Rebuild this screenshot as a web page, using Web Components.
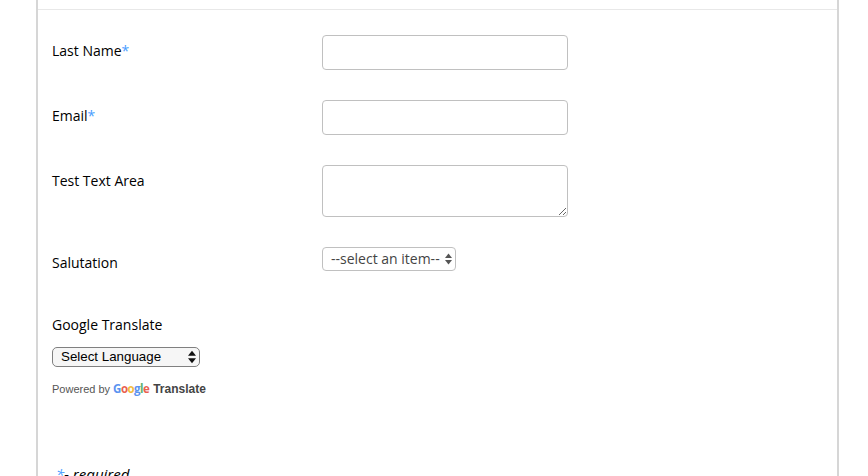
<!DOCTYPE html>
<html><head><meta charset="utf-8"><style>
html,body{margin:0;padding:0;background:#fff;overflow:hidden;height:476px}
body{font-family:"Open Sans",sans-serif;font-size:14px;color:#000}
</style></head><body>
<form-card>
  <form-row label="Last Name" required><form-input></form-input></form-row>
  <form-row label="Email" required><form-input></form-input></form-row>
  <form-row label="Test Text Area"><form-input multiline></form-input></form-row>
  <form-row label="Salutation"><item-select></item-select></form-row>
  <translate-block></translate-block>
  <required-note></required-note>
</form-card>
<script>
function def(name,html,init){customElements.define(name,class extends HTMLElement{
  constructor(){super();this.attachShadow({mode:'open'}).innerHTML=html;}
  connectedCallback(){if(init)init.call(this,this.shadowRoot);}
});}
const arrows=(c,w,h)=>`<svg width="${w}" height="${h}" viewBox="0 0 7 12" fill="${c}"><path d="M3.5 0.5 L7 5 H0Z"/><path d="M0 7 H7 L3.5 11.5Z"/></svg>`;
def('form-card',`<style>
:host{display:block;box-sizing:border-box;width:803px;height:476px;margin-left:36px;border-left:2px solid #d6d6d6;border-right:2px solid #d6d6d6;overflow:hidden}
.head{height:9px;border-bottom:1px solid #e8e8e8}
.body{padding:25px 0 0 14px;display:flex;flex-direction:column;gap:30px}
</style><div class="head"></div><div class="body"><slot></slot></div>`);
def('form-row',`<style>
:host{display:grid;grid-template-columns:270px 1fr;color:#000}
.l{padding-top:6px;line-height:20px;font-size:14px}
.s{color:#4a9eff}
</style><div class="l"><span id="t"></span><span class="s" id="r"></span></div><div><slot></slot></div>`,function(s){
  s.getElementById('t').textContent=this.getAttribute('label');
  s.getElementById('r').textContent=this.hasAttribute('required')?'*':'';
});
def('form-input',`<style>
:host{display:block;width:246px}
input,textarea{display:block;box-sizing:border-box;width:246px;margin:0;padding:4px 8px;border:1px solid #c0c0c0;border-radius:4px;background:#fff;font:14px "Open Sans",sans-serif;outline:none}
input{height:35px}
textarea{height:52px;resize:vertical}
</style><div id="w"></div>`,function(s){
  s.getElementById('w').innerHTML=this.hasAttribute('multiline')?'<textarea></textarea>':'<input type="text">';
});
def('item-select',`<style>
:host{display:block;position:relative;width:134px;height:24px}
select{appearance:none;-webkit-appearance:none;box-sizing:border-box;width:134px;height:24px;margin:0;padding:0 0 2px 8px;border:1px solid #c0c0c0;border-radius:4px;background:#fff;color:#444;font:14px "Open Sans",sans-serif;outline:none}
svg{position:absolute;right:4px;top:6px;pointer-events:none}
</style><select><option>--select an item--</option></select>${arrows('#555',7,12)}`);
def('translate-block',`<style>
:host{display:block;margin-top:12px}
.t{line-height:20px;color:#000;font-size:14px}
.w{position:relative;width:148px;height:20px;margin-top:12px}
select{display:block;appearance:none;-webkit-appearance:none;box-sizing:border-box;width:148px;height:20px;margin:0;padding:0 0 0 8px;border:1px solid #808080;border-radius:5px;background:#f6f6f6;color:#000;font:13.33px/16px "Liberation Sans",sans-serif;outline:none}
svg{position:absolute;right:4px;top:3px;pointer-events:none}
.p{display:flex;align-items:center;margin-top:13px;height:18px;font:11px "Liberation Sans",sans-serif;color:#555;white-space:nowrap}
.g{font:700 11.5px "Open Sans",sans-serif;letter-spacing:-.55px;margin-left:3px;position:relative;top:-1px}
.tr{font:700 12px "Liberation Sans",sans-serif;color:#444;margin-left:4px}
</style><div class="t">Google Translate</div>
<div class="w"><select><option>Select Language</option></select>${arrows('#111',8,14)}</div>
<div class="p">Powered by <span class="g"><span style="color:#5b93f0">G</span><span style="color:#ea5f4f">o</span><span style="color:#f2bd3c">o</span><span style="color:#5b93f0">g</span><span style="color:#5cb06c">l</span><span style="color:#ea5f4f">e</span></span><span class="tr">Translate</span></div>`);
def('required-note',`<style>
:host{display:block;margin-top:36px;padding-left:4px;font-style:italic;font-size:15px;line-height:20px;color:#000;white-space:nowrap}
.s{color:#4a9eff}
</style><span class="s">*</span>- required`);
</script></body></html>
